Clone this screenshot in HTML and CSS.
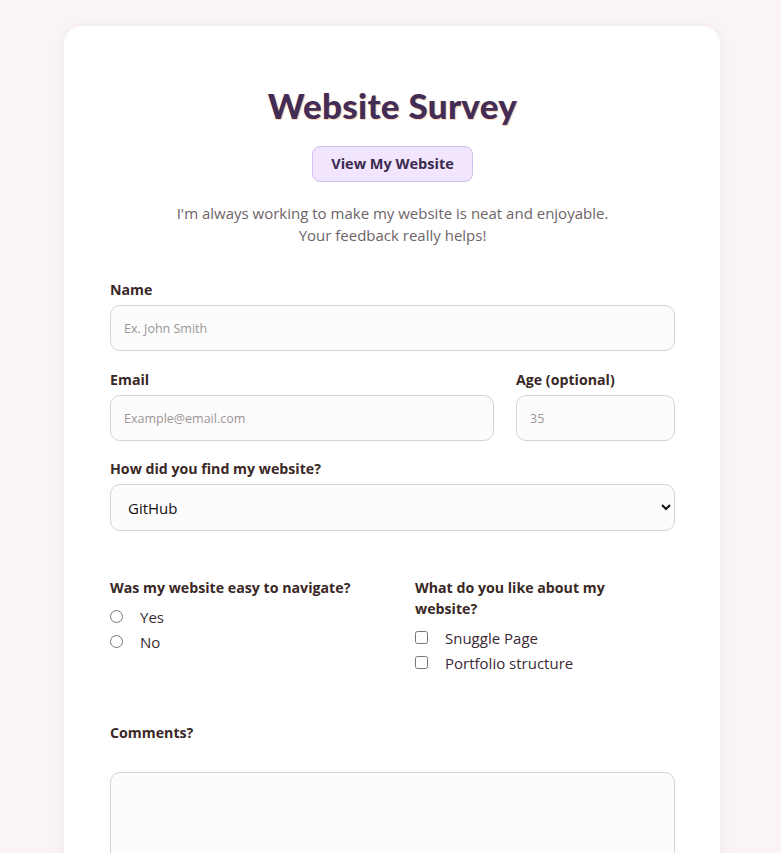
FILE: index.html
```html
<!DOCTYPE html>
<html lang="en">
<head>
<meta charset="utf-8">
<title>Website Survey</title>
<link rel="stylesheet" href="styles.css">
</head>
<body>
<main class="card">
  <h1 class="title">Website Survey</h1>
  <div class="btn-wrap"><a class="btn" href="#">View My Website</a></div>
  <p class="intro">I'm always working to make my website is neat and enjoyable.<br>Your feedback really helps!</p>
  <form class="form">
    <div class="field">
      <label class="label" for="name">Name</label>
      <input class="input" id="name" type="text" placeholder="Ex. John Smith">
    </div>
    <div class="row">
      <div class="col">
        <label class="label" for="email">Email</label>
        <input class="input" id="email" type="email" placeholder="Example@email.com">
      </div>
      <div class="col">
        <label class="label" for="age">Age (optional)</label>
        <input class="input" id="age" type="number" placeholder="35">
      </div>
    </div>
    <div class="field">
      <label class="label" for="find">How did you find my website?</label>
      <select class="select" id="find">
        <option>GitHub</option>
        <option>LinkedIn</option>
        <option>Friend</option>
      </select>
    </div>
    <div class="choices">
      <fieldset class="group">
        <legend class="label">Was my website easy to navigate?</legend>
        <label class="opt"><input type="radio" name="nav"><span>Yes</span></label>
        <label class="opt"><input type="radio" name="nav"><span>No</span></label>
      </fieldset>
      <fieldset class="group">
        <legend class="label legend-narrow">What do you like about my website?</legend>
        <label class="opt"><input type="checkbox"><span>Snuggle Page</span></label>
        <label class="opt"><input type="checkbox"><span>Portfolio structure</span></label>
      </fieldset>
    </div>
    <div class="field comments">
      <label class="label" for="comments">Comments?</label>
      <textarea class="textarea" id="comments"></textarea>
    </div>
  </form>
</main>
</body>
</html>
```
FILE: styles.css
```css
* { box-sizing: border-box; }
html, body { margin: 0; }
body {
  background: #faf4f7;
  font-family: "Open Sans", "Noto Sans", sans-serif;
  color: #3a2a33;
  padding: 26px 0 40px;
}
.card {
  width: 656px;
  margin: 0 auto 0 64px;
  background: #ffffff;
  border-radius: 18px;
  box-shadow: 0 2px 14px rgba(120, 80, 100, 0.08);
  padding: 58px 45px 60px 46px;
}
.title {
  margin: 0;
  text-align: center;
  font-family: "Lato", "DejaVu Sans", sans-serif;
  font-weight: 900;
  font-size: 35px;
  line-height: 42px;
  color: #432d57;
  text-shadow: 1px 1px 1px rgba(240, 170, 120, 0.55);
  letter-spacing: 0.3px;
}
.btn-wrap { text-align: center; margin-top: 20px; }
.btn {
  display: inline-block;
  height: 36px;
  line-height: 34px;
  padding: 0 18px;
  background: #f1e6fd;
  border: 1px solid #d3c0f0;
  border-radius: 8px;
  color: #3a2a4f;
  font-weight: 700;
  font-size: 14.5px;
  text-decoration: none;
}
.intro {
  margin: 20px 0 0;
  text-align: center;
  color: #6d6468;
  font-size: 15px;
  line-height: 22px;
}
.form { margin-top: 34px; display: flex; flex-direction: column; }
.field, .col { display: flex; flex-direction: column; }
.label {
  font-weight: 700;
  font-size: 14.2px;
  line-height: 20px;
  color: #3a2826;
  margin-bottom: 5px;
}
.input, .select, .textarea {
  width: 100%;
  border: 1px solid #d9d0d3;
  border-radius: 10px;
  background: #fdfcfc;
  font-family: inherit;
}
.input {
  height: 46px;
  padding: 0 13px;
  font-size: 12.5px;
  color: #333;
}
.input::placeholder { color: #9a9496; }
.row {
  display: grid;
  grid-template-columns: 384px 159px;
  column-gap: 22px;
  margin-top: 19px;
}
.select {
  height: 47px;
  padding: 0 13px;
  font-size: 15px;
  color: #111;
}
.row + .field { margin-top: 18px; }
.choices {
  display: grid;
  grid-template-columns: 260px 260px;
  column-gap: 45px;
  margin-top: 46px;
}
.group { border: 0; margin: 0; padding: 0; min-width: 0; }
.group legend { padding: 0; margin-bottom: 6px; line-height: 21px; }
.legend-narrow { max-width: 240px; }
.opt {
  display: flex;
  align-items: center;
  height: 25px;
  font-size: 15px;
  color: #3a2a36;
}
.opt input {
  margin: 0 17px 0 0;
  width: 13px;
  height: 13px;
}
.comments { margin-top: 48px; }
.comments .label { margin-bottom: 29px; }
.textarea { height: 150px; resize: vertical; }
```
